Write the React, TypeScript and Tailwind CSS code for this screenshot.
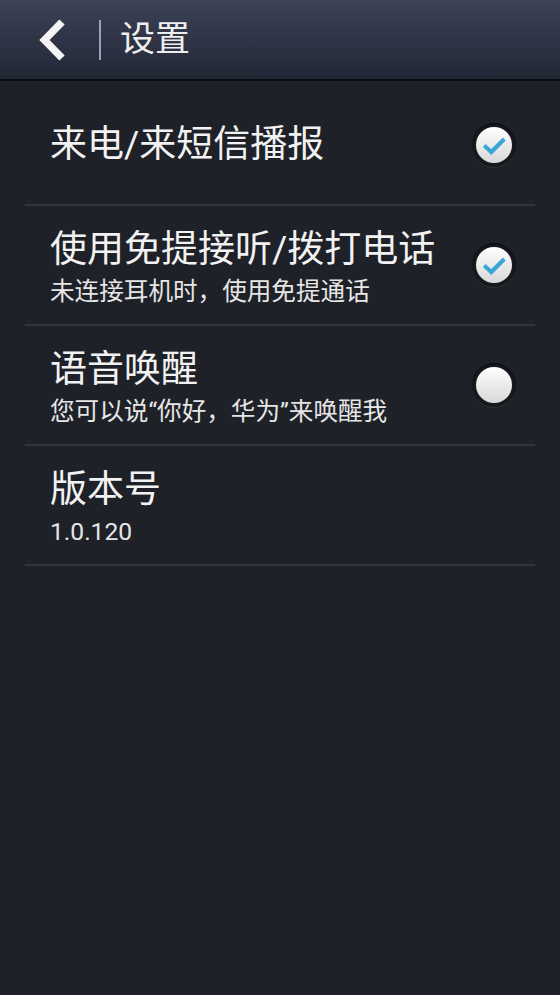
import React, { useState } from 'react';

const FONT = { fontFamily: 'Roboto, "Noto Sans CJK SC", "Noto Sans", sans-serif' };

type Item = {
  title: string;
  subtitle?: string;
  checkable?: boolean;
  checked?: boolean;
};

const items: Item[] = [
  { title: '来电/来短信播报', checkable: true, checked: true },
  { title: '使用免提接听/拨打电话', subtitle: '未连接耳机时，使用免提通话', checkable: true, checked: true },
  { title: '语音唤醒', subtitle: '您可以说“你好，华为”来唤醒我', checkable: true, checked: false },
  { title: '版本号', subtitle: '1.0.120' },
];

const CheckCircle = ({ checked, onClick }: { checked: boolean; onClick: () => void }) => (
  <button
    onClick={onClick}
    className="w-[44px] h-[44px] rounded-full bg-[#17191f] shadow-[inset_0_1px_2px_rgba(0,0,0,0.6),0_1px_0_rgba(255,255,255,0.06)] flex items-center justify-center flex-shrink-0"
  >
    <span className="w-[36px] h-[36px] rounded-full bg-gradient-to-b from-[#ffffff] to-[#d8d8d8] flex items-center justify-center">
      {checked && (
        <svg width="26" height="26" viewBox="0 0 24 24">
          <path d="M3 12.5 L9.5 18.5 L21.5 6.5" fill="none" stroke="#3aa6d6" strokeWidth="3.8" strokeLinecap="butt" strokeLinejoin="miter" />
        </svg>
      )}
    </span>
  </button>
);

const App = () => {
  const [state, setState] = useState(items.map(i => !!i.checked));

  const toggle = (idx: number) => {
    setState(s => s.map((v, i) => (i === idx ? !v : v)));
  };

  return (
    <div className="w-[560px] h-[995px] bg-[#1f2129] flex flex-col" style={FONT}>
      {/* title bar */}
      <div className="h-[81px] flex-shrink-0 bg-gradient-to-b from-[#3c4357] to-[#222736] border-b-2 border-[#0b0c10] flex items-center">
        <button className="w-[99px] h-full flex items-center pl-[37px]">
          <svg width="30" height="42" viewBox="0 0 30 42">
            <path d="M25 3 L7.5 21 L25 39" fill="none" stroke="#f4f4f4" strokeWidth="7.5" strokeLinejoin="miter" />
          </svg>
        </button>
        <div className="w-[2px] h-[40px] bg-[#9aa3b5]" />
        <span className="ml-[19px] text-[35px] leading-none text-[#eeeeee]">设置</span>
      </div>

      {/* settings list */}
      <div className="pt-[5px] px-[25px] flex flex-col">
        {items.map((item, idx) => (
          <div key={item.title} className="h-[120px] border-b-2 border-[#30343e] flex items-center justify-between pl-[25px] pr-[19px]">
            <div className={item.subtitle ? 'flex flex-col gap-[4px] pt-[6px]' : 'flex flex-col'}>
              <span className="text-[37px] leading-[44px] text-[#f2f2f2]">{item.title}</span>
              {item.subtitle && (
                <span className="text-[24.6px] leading-[32px] text-[#e6e6e6]">{item.subtitle}</span>
              )}
            </div>
            {item.checkable && <CheckCircle checked={state[idx]} onClick={() => toggle(idx)} />}
          </div>
        ))}
      </div>
    </div>
  );
};

export default App;
